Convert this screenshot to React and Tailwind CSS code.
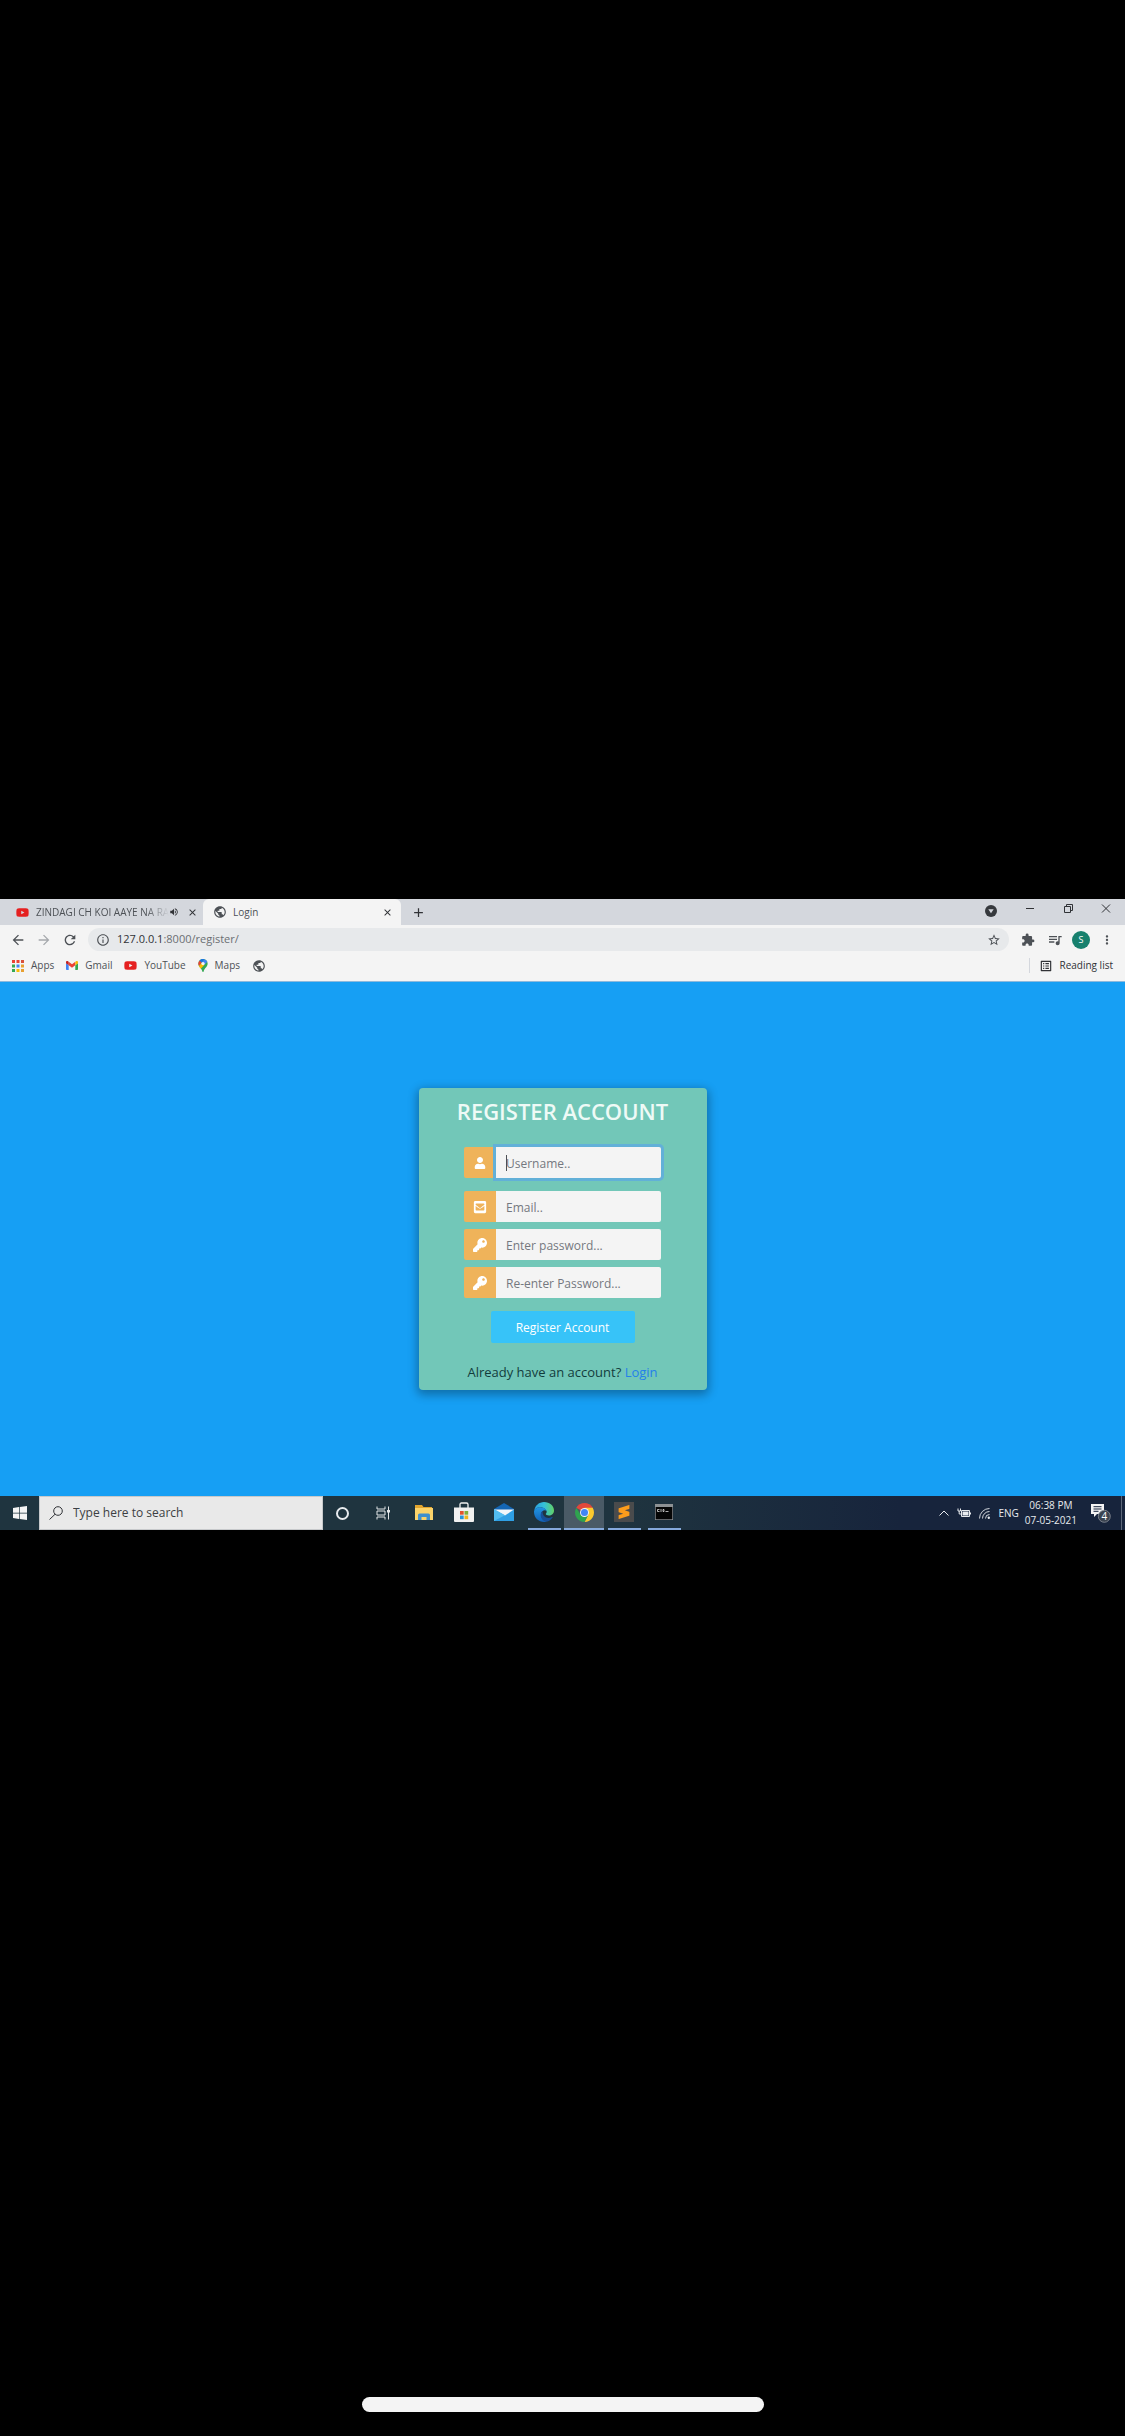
import React from "react";
import {
  MdArrowBack, MdArrowForward, MdRefresh, MdInfoOutline, MdStarBorder, MdExtension,
  MdQueueMusic, MdMoreVert, MdPublic, MdVolumeUp, MdClose, MdAdd, MdOutlineListAlt,
} from "react-icons/md";
import { FaUser, FaEnvelopeSquare, FaKey, FaYoutube } from "react-icons/fa";
import { SiSublimetext } from "react-icons/si";

function Apps() {
  const colors = ["#ea4335", "#ea4335", "#d9503a", "#34a853", "#4285f4", "#e8a030", "#34a853", "#fbbc04", "#e8a030"];
  return (
    <svg viewBox="0 0 12 12" className="size-3">
      {colors.map((c, i) => (
        <rect key={i} x={(i % 3) * 4.5} y={Math.floor(i / 3) * 4.5} width="3" height="3" fill={c} />
      ))}
    </svg>
  );
}

function Gmail() {
  return (
    <svg viewBox="0 0 12 9" className="h-[9px] w-3">
      <path d="M0 1.2V8.2c0 .5.3.8.8.8H2.7V4.2L0 2z" fill="#4285f4" />
      <path d="M12 1.2V8.2c0 .5-.3.8-.8.8H9.3V4.2L12 2z" fill="#34a853" />
      <path d="M2.7.8 6 3.3 9.3.8V4.2L6 6.7 2.7 4.2z" fill="#ea4335" />
      <path d="M0 1.2C0 0 1.3-.3 2.2.4L2.7.8V4.2L0 2.2z" fill="#c5221f" />
      <path d="M12 1.2C12 0 10.7-.3 9.8.4L9.3.8V4.2L12 2.2z" fill="#fbbc04" />
    </svg>
  );
}

function MapsPin() {
  return (
    <svg viewBox="0 0 10 14" className="h-[13px] w-[10px]">
      <path d="M5 0a5 5 0 0 0-5 5c0 3.5 3.5 4.5 4.3 8.5.2.7 1.2.7 1.4 0C6.5 9.5 10 8.5 10 5a5 5 0 0 0-5-5z" fill="#34a853" />
      <path d="M1.2 1.8A5 5 0 0 1 6.5.2L3.3 4z" fill="#1a73e8" />
      <path d="M6.5.2A5 5 0 0 1 9.6 3L6.7 6.3 3.3 4z" fill="#4285f4" />
      <path d="M1.2 1.8 3.6 3.9.7 7.5A5 5 0 0 1 1.2 1.8z" fill="#ea4335" />
      <path d="M.7 7.5 3.5 4.2 6.6 6.3 2.7 10.5C1.9 9.5 1.1 8.7.7 7.5z" fill="#fbbc04" />
      <circle cx="5" cy="4.9" r="1.8" fill="#f4f4f4" />
    </svg>
  );
}

function Folder() {
  return (
    <svg viewBox="0 0 18 15" className="h-[15px] w-[18px]">
      <path d="M0 0h7l1.5 2H17v3H0z" fill="#e2a52f" />
      <path d="M0 3h18v12H0z" fill="#fbd36a" />
      <path d="M3 15V10q0-1.500 1.500-1.500h9Q15 8.500 15 10v5h-3.500v-3h-5v3z" fill="#3f8fce" />
    </svg>
  );
}

function Store() {
  return (
    <svg viewBox="0 0 20 20" className="size-5">
      <path d="M6 6V2.500Q6 1 7.500 1h5Q14 1 14 2.500V6" fill="none" stroke="#f1f1f1" strokeWidth="1.3" />
      <path d="M0 5.500h20V19q0 1-1 1H1q-1 0-1-1z" fill="#f1f1f1" />
      <path d="M6 9h3.700v3.700H6z" fill="#e2542c" />
      <path d="M10.500 9h3.700v3.700h-3.700z" fill="#7fb03a" />
      <path d="M6 13.500h3.700v3.700H6z" fill="#2b95d6" />
      <path d="M10.500 13.500h3.700v3.700h-3.700z" fill="#f0b51c" />
    </svg>
  );
}

function Mail() {
  return (
    <svg viewBox="0 0 20 18" className="h-[18px] w-5">
      <path d="M0 6 10 0l10 6v3H0z" fill="#1466b4" />
      <path d="M0 6v12h20V6l-9 6z" fill="#2f9fe4" />
      <path d="M0 6.500h20L11 12.500z" fill="#f1f6fa" />
      <path d="M0 6v12l11-5.800z" fill="#52bdf1" />
    </svg>
  );
}

function Edge() {
  return (
    <svg viewBox="0 0 20 20" className="size-5">
      <defs>
        <linearGradient id="edge-top" x1="0" x2="1">
          <stop offset="0" stopColor="#2a9fe0" />
          <stop offset=".5" stopColor="#35c1d8" />
          <stop offset="1" stopColor="#62d165" />
        </linearGradient>
        <linearGradient id="edge-left" x1="0" x2="0" y1="0" y2="1">
          <stop offset="0" stopColor="#2196e3" />
          <stop offset="1" stopColor="#1260b5" />
        </linearGradient>
      </defs>
      <path d="M.3 8.500C1 3.500 5.200 0 10 0c5.800 0 10 4 10 8.500 0 3.300-2.500 5-5 5-2 0-3.200-.7-3.200-1.400 0-.6.900-1 .9-2.300C12.700 7.500 9.700 5.200 6.500 5.200 3 5.200.8 7 .3 8.500z" fill="url(#edge-top)" />
      <path d="M0 10C0 7 3 5.200 6.500 5.200c3.200 0 5.600 1.700 6.100 3.700C11.500 7.500 7 8 7 12.500c0 3.600 3 6.800 6.500 7C6.500 21.500 0 17 0 10z" fill="url(#edge-left)" />
      <path d="M8.700 9C7 10 6 12.500 7 15.200c1 2.800 3.700 4.500 6.300 4.300 2-.5 4.200-2.200 5.300-4 .3-.5-.1-.8-.6-.5-5 2.500-10-.6-9.300-6z" fill="#174f98" />
    </svg>
  );
}

function Chrome() {
  return (
    <svg viewBox="0 0 20 20" className="size-[19px]">
      <path d="M10 10 1.340 5A10 10 0 0 1 18.660 5z" fill="#e2483b" />
      <path d="M13.900 12.300 10 20A10 10 0 0 0 18.660 5H10z" fill="#fbc92e" />
      <path d="M6.100 12.300 1.340 5A10 10 0 0 0 10 20l3.900-7.700z" fill="#2fa24f" />
      <circle cx="10" cy="10" r="4.700" fill="#f4f4f4" />
      <circle cx="10" cy="10" r="3.700" fill="#4285f4" />
    </svg>
  );
}

function Terminal() {
  return (
    <svg viewBox="0 0 18 16" className="h-4 w-[18px]">
      <path d="M0 0h18v16H0z" fill="#8d9194" />
      <path d="M.7 3h16.600v12.300H.7z" fill="#050505" />
      <path d="M2.500 5.500h2M2.500 5.500v2h2M6 5v3M8 5.500h1v2H8zM10.500 7.500h3" stroke="#ddd" strokeWidth=".8" fill="none" />
    </svg>
  );
}

function TaskView() {
  return (
    <svg viewBox="0 0 14 14" className="size-[14px]" fill="none" stroke="#e3e6e8">
      <path d="M1 .5V3h8V.5M1 13.500V11h8v2.500M1 5h8v4H1zM12.500.5v13" />
      <path d="M11 4h3v2.500h-3z" fill="#e3e6e8" stroke="none" />
    </svg>
  );
}

const bookmarks = [
  { label: "Apps", icon: <Apps /> },
  { label: "Gmail", icon: <Gmail /> },
  { label: "YouTube", icon: <FaYoutube className="size-[13px] text-[#e52020]" /> },
  { label: "Maps", icon: <MapsPin /> },
];

function BrowserChrome() {
  return (
    <header className="bg-[#f4f4f4] font-['Open_Sans','Noto_Sans',sans-serif] text-[10px] text-[#4d5156]">
      <div className="flex h-[26px] bg-[#d4d7dd]">
        <div className="flex w-[203px] items-center pr-[7px] pl-4">
          <FaYoutube className="mr-[7px] size-[13px] shrink-0 text-[#e52020]" />
          <span className="shrink-0 whitespace-nowrap [mask-image:linear-gradient(to_right,black_82%,transparent)]">
            ZINDAGI CH KOI AAYE NA RA
          </span>
          <MdVolumeUp className="ml-auto size-[10px] shrink-0 text-[#303236]" />
          <button aria-label="Close tab" className="ml-2"><MdClose className="size-[11px] text-[#303236]" /></button>
        </div>
        <div className="flex w-[198px] items-center rounded-t-md bg-[#f4f4f4] pr-2 pl-[10px]">
          <MdPublic className="mr-[6px] size-[14px] text-[#4d5156]" />
          <span>Login</span>
          <button aria-label="Close tab" className="ml-auto"><MdClose className="size-[11px] text-[#303236]" /></button>
        </div>
        <button aria-label="New tab" className="ml-[10px]"><MdAdd className="size-[15px] text-[#303236]" /></button>
        <div className="ml-auto flex items-start gap-7 pt-1 pr-[14px] text-[#303236]">
          <svg viewBox="0 0 12 12" className="mt-[2px] size-3"><circle cx="6" cy="6" r="6" fill="#36393d" /><path d="M3.300 4.300h5.400L6 8.300z" fill="#d4d7dd" /></svg>
          <button aria-label="Minimize"><svg viewBox="0 0 10 11" className="h-[11px] w-[10px]" stroke="currentColor"><path d="M1 5.500h8" /></svg></button>
          <button aria-label="Restore"><svg viewBox="0 0 10 11" className="h-[11px] w-[10px]" fill="none" stroke="currentColor"><path d="M1.500 3.500h6v6h-6zM3.500 3.500v-2h6v6h-2" /></svg></button>
          <button aria-label="Close window"><svg viewBox="0 0 10 11" className="h-[11px] w-[10px]" stroke="currentColor"><path d="m1 1.500 8 8m0-8-8 8" /></svg></button>
        </div>
      </div>
      <div className="flex h-[29px] items-center pr-[11px] pl-[10px] text-[#4d5156]">
        <button aria-label="Back"><MdArrowBack className="size-4" /></button>
        <button aria-label="Forward" className="ml-[10px]"><MdArrowForward className="size-4 text-[#a5a8ac]" /></button>
        <button aria-label="Reload" className="ml-[10px]"><MdRefresh className="size-4" /></button>
        <div className="ml-[10px] flex h-[23px] flex-1 items-center rounded-full bg-[#e7e9eb] px-2">
          <MdInfoOutline className="size-[14px]" />
          <a href="#" className="ml-[7px] text-[11px] text-[#6b6f73]"><span className="text-[#303236]">127.0.0.1</span>:8000/register/</a>
          <MdStarBorder className="ml-auto size-[14px]" />
        </div>
        <MdExtension className="ml-3 size-[14px]" />
        <MdQueueMusic className="ml-3 size-4" />
        <span className="ml-[9px] grid size-[18px] place-items-center rounded-full bg-[#17806d] text-[9px] text-white">S</span>
        <button aria-label="Menu" className="ml-[10px]"><MdMoreVert className="size-[14px]" /></button>
      </div>
      <nav className="flex h-7 items-center border-b border-[#8db9dc] pr-3 pb-1 pl-3">
        {bookmarks.map((b) => (
          <a key={b.label} href="#" className="mr-3 flex items-center gap-[7px]">{b.icon}{b.label}</a>
        ))}
        <MdPublic className="size-[14px]" />
        <a href="#" className="ml-auto flex items-center gap-[6px] border-l border-[#d4d7dd] pl-[9px] text-[#303236]">
          <MdOutlineListAlt className="size-[14px]" />Reading list
        </a>
      </nav>
    </header>
  );
}

function Field({ label, icon, type = "text", focused }) {
  return (
    <label className="flex h-[31px]">
      <span className="grid w-8 shrink-0 place-items-center rounded-l-[2px] bg-[#efb35a] text-white">{icon}</span>
      <input
        type={type}
        aria-label={label}
        placeholder={label}
        className={
          focused
            ? "min-w-0 flex-1 rounded-r-[2px] bg-[#f4f4f4] px-[10px] pt-[2px] text-xs ring-3 ring-[#62b0d8] outline-none placeholder:text-[#74787f]"
            : "min-w-0 flex-1 rounded-r-[2px] bg-[#f4f4f4] px-[10px] pt-[2px] text-xs outline-none placeholder:text-[#74787f]"
        }
      />
    </label>
  );
}

function RegisterPage() {
  return (
    <main className="flex justify-center bg-[#169ff4] py-[106px] font-['Open_Sans','Noto_Sans',sans-serif]">
      <form className="flex w-[288px] flex-col items-center rounded bg-[#72c7b8] pt-[9px] pb-2 shadow-[0_3px_10px_2px_rgba(0,0,0,0.3)]">
        <h1 className="text-[22px] leading-7 font-semibold whitespace-nowrap text-[#eefaf6]">REGISTER ACCOUNT</h1>
        <div className="mt-[22px] flex w-[197px] flex-col gap-[7px]">
          <div className="relative mb-[6px]">
            <Field label="Username.." icon={<FaUser className="size-3" />} focused />
            <span className="absolute top-2 left-[42px] h-4 w-px bg-[#4d5156]" />
          </div>
          <Field label="Email.." icon={<FaEnvelopeSquare className="size-[14px]" />} />
          <Field label="Enter password..." type="password" icon={<FaKey className="size-[14px]" />} />
          <Field label="Re-enter Password..." type="password" icon={<FaKey className="size-[14px]" />} />
        </div>
        <button type="button" className="mt-[13px] h-8 w-36 rounded-[2px] bg-[#37c3f8] pt-px text-xs text-white">Register Account</button>
        <p className="mt-[19px] text-[13px] leading-5 whitespace-nowrap text-[#123c3c]">
          Already have an account? <a href="#" className="text-[#2480ea]">Login</a>
        </p>
      </form>
    </main>
  );
}

const tasks = [
  { name: "File Explorer", icon: <Folder /> },
  { name: "Store", icon: <Store /> },
  { name: "Mail", icon: <Mail /> },
  { name: "Edge", icon: <Edge />, open: true },
  { name: "Chrome", icon: <Chrome />, open: true, active: true },
  { name: "Sublime Text", icon: <span className="grid size-5 place-items-center bg-[#4a4b4c]"><SiSublimetext className="size-[14px] text-[#fb9c1c]" /></span>, open: true },
  { name: "Command Prompt", icon: <Terminal />, open: true },
];

function Taskbar() {
  return (
    <footer className="flex h-[34px] items-stretch bg-linear-to-r from-[#1f343f] from-55% to-[#17243c] to-80% font-['Open_Sans','Noto_Sans',sans-serif] text-[#e8ebee]">
      <button aria-label="Start" className="grid w-[39px] place-items-center">
        <svg viewBox="0 0 14 14" className="size-[14px]" fill="#f4f4f4"><path d="M0 2 6 1.100V6.700H0zM6.700 1 14 0V6.700H6.700zM0 7.400H6V13L0 12.100zM6.700 7.400H14V14L6.700 13.100z" /></svg>
      </button>
      <label className="flex w-[284px] items-center border border-[#c7c9cb] bg-[#e9e9e9] pl-[9px]">
        <svg viewBox="0 0 14 14" className="size-[14px]" fill="none" stroke="#303236"><circle cx="9" cy="5" r="4.300" /><path d="M6 8.300.5 13.500" /></svg>
        <input aria-label="Search" placeholder="Type here to search" className="ml-[10px] min-w-0 flex-1 bg-transparent text-xs outline-none placeholder:text-[#3c3f43]" />
      </label>
      <button aria-label="Cortana" className="grid w-[39px] place-items-center">
        <span className="size-[13px] rounded-full border-2 border-[#e8ebee]" />
      </button>
      <button aria-label="Task view" className="grid w-[42px] place-items-center"><TaskView /></button>
      {tasks.map((t) => (
        <button key={t.name} aria-label={t.name} className={t.active ? "flex w-10 flex-col items-center bg-[#4a5a66]" : "flex w-10 flex-col items-center"}>
          <span className="grid flex-1 place-items-center">{t.icon}</span>
          <span className={t.open ? (t.active ? "h-[2px] w-full bg-[#85a9dc]" : "h-[2px] w-[33px] bg-[#85a9dc]") : "h-[2px]"} />
        </button>
      ))}
      <div className="ml-auto flex items-center">
        <svg viewBox="0 0 10 6" className="h-[6px] w-[10px]" fill="none" stroke="currentColor"><path d="m.5 5.500 4.500-4.500 4.500 4.500" /></svg>
        <svg viewBox="0 0 14 10" className="ml-[8px] h-[10px] w-[14px]" fill="none" stroke="currentColor"><path d="M4.500 2.500h8v6h-8zM1 .5v2.500h2.500V.5M2.200 3v3h2M13.500 4.500v2" /><path d="M5.500 3.500h6v4h-6z" fill="currentColor" stroke="none" /></svg>
        <svg viewBox="0 0 11 11" className="ml-[8px] size-[11px]" fill="none" stroke="currentColor" strokeWidth=".9"><path d="M.5 10.500A10 10 0 0 1 10.500.5M3.500 10.500a7 7 0 0 1 7-7M6.500 10.500a4 4 0 0 1 4-4" /><circle cx="9.800" cy="9.800" r="1.200" fill="currentColor" stroke="none" /></svg>
        <span className="ml-[8px] text-[10px]">ENG</span>
        <time className="ml-[6px] text-center text-[10px] leading-[15px]">06:38 PM<br />07-05-2021</time>
        <svg viewBox="0 0 20 20" className="ml-[14px] size-5">
          <path d="M0 1h13v10H6l-3 3v-3H0z" fill="#f4f4f4" />
          <path d="M2.500 3.700h8M2.500 6h8M2.500 8.300h5" stroke="#17243c" />
          <circle cx="13.300" cy="13.300" r="6" fill="#3a4350" stroke="#8b9199" strokeWidth=".8" />
          <text x="13.300" y="16.800" textAnchor="middle" fill="#fff" fontSize="10">4</text>
        </svg>
        <span className="mr-[3px] ml-[10px] h-[34px] w-px bg-[#5c6779]" />
      </div>
    </footer>
  );
}

export default function App() {
  return (
    <div className="grid min-h-screen grid-rows-[1fr_auto_1fr] bg-black pb-[7px]">
      <div />
      <section>
        <BrowserChrome />
        <RegisterPage />
        <Taskbar />
      </section>
      <div className="flex items-end justify-center pb-[17px]">
        <div className="h-[15px] w-[402px] rounded-full bg-[#f4f4f4]" />
      </div>
    </div>
  );
}
